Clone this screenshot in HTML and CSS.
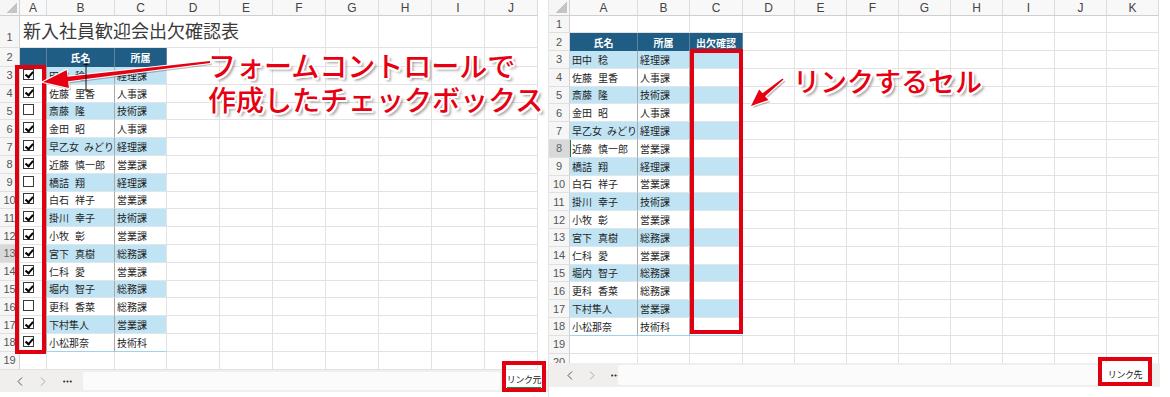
FILE: index.html
```html
<!DOCTYPE html>
<html lang="ja">
<head>
<meta charset="utf-8">
<title>出欠確認表</title>
<link rel="stylesheet" href="styles.css">
</head>
<body>
<div class="page">
  <section class="sheet L">
    <div class="grid">
      <div class="row hrow">
        <div class="rh corner"><span class="tri"></span></div>
        <div class="ch ca">A</div><div class="ch cb">B</div><div class="ch cc">C</div>
        <div class="ch cd">D</div><div class="ch cd">E</div><div class="ch cd">F</div><div class="ch cd">G</div><div class="ch cd">H</div><div class="ch cd">I</div><div class="ch cd">J</div>
      </div>
      <div class="row r1"><div class="rh rh-bottom">1</div><div class="cell title">新入社員歓迎会出欠確認表</div><div class="fill fill5"></div></div>
      <div class="row r2"><div class="rh">2</div><div class="th ca"></div><div class="th cb">氏名</div><div class="th cc">所属</div><div class="fill"></div></div>
      <div class="row"><div class="rh">3</div><div class="cell ca sep"><span class="chk on"></span></div><div class="td band cb sep">田中<span class="sp"></span>稔</div><div class="td band cc">経理課</div><div class="fill"></div></div>
      <div class="row"><div class="rh">4</div><div class="cell ca sep"><span class="chk on"></span></div><div class="td cb sep">佐藤<span class="sp"></span>里香</div><div class="td cc">人事課</div><div class="fill"></div></div>
      <div class="row"><div class="rh">5</div><div class="cell ca sep"><span class="chk"></span></div><div class="td band cb sep">斎藤<span class="sp"></span>隆</div><div class="td band cc">技術課</div><div class="fill"></div></div>
      <div class="row"><div class="rh">6</div><div class="cell ca sep"><span class="chk on"></span></div><div class="td cb sep">金田<span class="sp"></span>昭</div><div class="td cc">人事課</div><div class="fill"></div></div>
      <div class="row"><div class="rh">7</div><div class="cell ca sep"><span class="chk on"></span></div><div class="td band cb sep">早乙女<span class="sp"></span>みどり</div><div class="td band cc">経理課</div><div class="fill"></div></div>
      <div class="row"><div class="rh">8</div><div class="cell ca sep"><span class="chk on"></span></div><div class="td cb sep">近藤<span class="sp"></span>慎一郎</div><div class="td cc">営業課</div><div class="fill"></div></div>
      <div class="row"><div class="rh">9</div><div class="cell ca sep"><span class="chk"></span></div><div class="td band cb sep">橋詰<span class="sp"></span>翔</div><div class="td band cc">経理課</div><div class="fill"></div></div>
      <div class="row"><div class="rh">10</div><div class="cell ca sep"><span class="chk on"></span></div><div class="td cb sep">白石<span class="sp"></span>祥子</div><div class="td cc">営業課</div><div class="fill"></div></div>
      <div class="row"><div class="rh">11</div><div class="cell ca sep"><span class="chk on"></span></div><div class="td band cb sep">掛川<span class="sp"></span>幸子</div><div class="td band cc">技術課</div><div class="fill"></div></div>
      <div class="row"><div class="rh">12</div><div class="cell ca sep"><span class="chk on"></span></div><div class="td cb sep">小牧<span class="sp"></span>彰</div><div class="td cc">営業課</div><div class="fill"></div></div>
      <div class="row"><div class="rh sel">13</div><div class="cell ca sep"><span class="chk on"></span></div><div class="td band cb sep">宮下<span class="sp"></span>真樹</div><div class="td band cc">総務課</div><div class="fill"></div></div>
      <div class="row"><div class="rh">14</div><div class="cell ca sep"><span class="chk on"></span></div><div class="td cb sep">仁科<span class="sp"></span>愛</div><div class="td cc">営業課</div><div class="fill"></div></div>
      <div class="row"><div class="rh">15</div><div class="cell ca sep"><span class="chk on"></span></div><div class="td band cb sep">堀内<span class="sp"></span>智子</div><div class="td band cc">総務課</div><div class="fill"></div></div>
      <div class="row"><div class="rh">16</div><div class="cell ca sep"><span class="chk"></span></div><div class="td cb sep">更科<span class="sp"></span>香菜</div><div class="td cc">総務課</div><div class="fill"></div></div>
      <div class="row"><div class="rh">17</div><div class="cell ca sep"><span class="chk on"></span></div><div class="td band cb sep">下村隼人</div><div class="td band cc">営業課</div><div class="fill"></div></div>
      <div class="row"><div class="rh">18</div><div class="cell ca sep"><span class="chk on"></span></div><div class="td last cb sep">小松那奈</div><div class="td last cc">技術科</div><div class="fill"></div></div>
      <div class="row"><div class="rh">19</div><div class="cell ca"></div><div class="cell cb"></div><div class="cell cc"></div><div class="fill"></div></div>
    </div>
    <div class="tabbar">
      <div class="nav">
        <svg class="nb" width="6" height="9" viewBox="0 0 6 9"><path d="M5 0.5 L1 4.5 L5 8.5" fill="none" stroke="#555" stroke-width="1"/></svg>
        <svg class="nb" width="6" height="9" viewBox="0 0 6 9"><path d="M1 0.5 L5 4.5 L1 8.5" fill="none" stroke="#aaa" stroke-width="1"/></svg>
        <svg class="dots" width="9" height="3" viewBox="0 0 9 3"><circle cx="1.2" cy="1.5" r="1.1" fill="#333"/><circle cx="4.5" cy="1.5" r="1.1" fill="#333"/><circle cx="7.8" cy="1.5" r="1.1" fill="#333"/></svg>
      </div>
      <div class="scroll"></div>
      <div class="tab active"><span class="tab-label">リンク元</span></div>
      <div class="tabend"></div>
    </div>
  </section>

  <section class="sheet R">
    <div class="grid">
      <div class="row hrow">
        <div class="rh corner"><span class="tri"></span></div>
        <div class="ch ca">A</div><div class="ch cb">B</div><div class="ch cc">C</div>
        <div class="ch cd">D</div><div class="ch cd">E</div><div class="ch cd">F</div><div class="ch cd">G</div><div class="ch cd">H</div><div class="ch cd">I</div><div class="ch cd">J</div><div class="ch cd">K</div>
      </div>
      <div class="row r1"><div class="rh">1</div><div class="cell ca"></div><div class="cell cb"></div><div class="cell cc"></div><div class="fill"></div></div>
      <div class="row r2"><div class="rh">2</div><div class="th ca">氏名</div><div class="th cb">所属</div><div class="th cc">出欠確認</div><div class="fill"></div></div>
      <div class="row"><div class="rh">3</div><div class="td band ca sep">田中<span class="sp"></span>稔</div><div class="td band cb sep">経理課</div><div class="td band cc"></div><div class="fill"></div></div>
      <div class="row"><div class="rh">4</div><div class="td ca sep">佐藤<span class="sp"></span>里香</div><div class="td cb sep">人事課</div><div class="td cc"></div><div class="fill"></div></div>
      <div class="row"><div class="rh">5</div><div class="td band ca sep">斎藤<span class="sp"></span>隆</div><div class="td band cb sep">技術課</div><div class="td band cc"></div><div class="fill"></div></div>
      <div class="row"><div class="rh">6</div><div class="td ca sep">金田<span class="sp"></span>昭</div><div class="td cb sep">人事課</div><div class="td cc"></div><div class="fill"></div></div>
      <div class="row"><div class="rh">7</div><div class="td band ca sep">早乙女<span class="sp"></span>みどり</div><div class="td band cb sep">経理課</div><div class="td band cc"></div><div class="fill"></div></div>
      <div class="row"><div class="rh sel">8</div><div class="td ca sep active-cell">近藤<span class="sp"></span>慎一郎</div><div class="td cb sep">営業課</div><div class="td cc"></div><div class="fill"></div></div>
      <div class="row"><div class="rh">9</div><div class="td band ca sep">橋詰<span class="sp"></span>翔</div><div class="td band cb sep">経理課</div><div class="td band cc"></div><div class="fill"></div></div>
      <div class="row"><div class="rh">10</div><div class="td ca sep">白石<span class="sp"></span>祥子</div><div class="td cb sep">営業課</div><div class="td cc"></div><div class="fill"></div></div>
      <div class="row"><div class="rh">11</div><div class="td band ca sep">掛川<span class="sp"></span>幸子</div><div class="td band cb sep">技術課</div><div class="td band cc"></div><div class="fill"></div></div>
      <div class="row"><div class="rh">12</div><div class="td ca sep">小牧<span class="sp"></span>彰</div><div class="td cb sep">営業課</div><div class="td cc"></div><div class="fill"></div></div>
      <div class="row"><div class="rh">13</div><div class="td band ca sep">宮下<span class="sp"></span>真樹</div><div class="td band cb sep">総務課</div><div class="td band cc"></div><div class="fill"></div></div>
      <div class="row"><div class="rh">14</div><div class="td ca sep">仁科<span class="sp"></span>愛</div><div class="td cb sep">営業課</div><div class="td cc"></div><div class="fill"></div></div>
      <div class="row"><div class="rh">15</div><div class="td band ca sep">堀内<span class="sp"></span>智子</div><div class="td band cb sep">総務課</div><div class="td band cc"></div><div class="fill"></div></div>
      <div class="row"><div class="rh">16</div><div class="td ca sep">更科<span class="sp"></span>香菜</div><div class="td cb sep">総務課</div><div class="td cc"></div><div class="fill"></div></div>
      <div class="row"><div class="rh">17</div><div class="td band ca sep">下村隼人</div><div class="td band cb sep">営業課</div><div class="td band cc"></div><div class="fill"></div></div>
      <div class="row"><div class="rh">18</div><div class="td last ca sep">小松那奈</div><div class="td last cb sep">技術科</div><div class="td last cc"></div><div class="fill"></div></div>
      <div class="row"><div class="rh">19</div><div class="cell ca"></div><div class="cell cb"></div><div class="cell cc"></div><div class="fill"></div></div>
      <div class="row"><div class="rh">20</div><div class="cell ca"></div><div class="cell cb"></div><div class="cell cc"></div><div class="fill"></div></div>
    </div>
    <div class="tabbar">
      <div class="nav">
        <svg class="nb" width="6" height="9" viewBox="0 0 6 9"><path d="M5 0.5 L1 4.5 L5 8.5" fill="none" stroke="#555" stroke-width="1"/></svg>
        <svg class="nb" width="6" height="9" viewBox="0 0 6 9"><path d="M1 0.5 L5 4.5 L1 8.5" fill="none" stroke="#aaa" stroke-width="1"/></svg>
        <svg class="dots" width="9" height="3" viewBox="0 0 9 3"><circle cx="1.2" cy="1.5" r="1.1" fill="#333"/><circle cx="4.5" cy="1.5" r="1.1" fill="#333"/><circle cx="7.8" cy="1.5" r="1.1" fill="#333"/></svg>
      </div>
      <div class="scroll"></div>
      <div class="tab"><span class="tab-label">リンク先</span></div>
      <div class="tabend"></div>
    </div>
  </section>
</div>

<div class="redbox box-chk"></div>
<div class="redbox box-link"></div>
<div class="redbox box-tab1"></div>
<div class="redbox box-tab2"></div>

<svg class="arrows" width="1170" height="397" viewBox="0 0 1170 397">
  <g transform="translate(2,2)" fill="#000" opacity="0.25">
    <polygon points="209.9,61 67.5,76.8 66.7,70.1 43,82 68.9,87.9 68.1,81.2 210.1,63"/>
    <polygon points="782.5,78.4 762.5,93.3 759.2,89.5 751,106 768.4,100.1 765.1,96.3 783.5,79.6"/>
  </g>
  <g fill="#e60012" stroke="#fff" stroke-width="2.2" stroke-linejoin="round" paint-order="stroke">
    <polygon points="209.9,61 67.5,76.8 66.7,70.1 43,82 68.9,87.9 68.1,81.2 210.1,63"/>
    <polygon points="782.5,78.4 762.5,93.3 759.2,89.5 751,106 768.4,100.1 765.1,96.3 783.5,79.6"/>
  </g>
  <path d="M83.5 64.5 H88.5 M86 64.5 V90 M83.5 90 H88.5" stroke="#111" stroke-width="1" fill="none"/>
</svg>

<div class="note note-left"><div class="note-line">フォームコントロールで</div><div class="note-line">作成したチェックボックス</div></div>
<div class="note note-right">リンクするセル</div>
</body>
</html>
```

FILE: styles.css
```css
* { box-sizing: border-box; }
html, body { margin: 0; padding: 0; }
body {
  width: 1170px;
  height: 397px;
  overflow: hidden;
  background: #fff;
  position: relative;
  font-family: "Noto Sans CJK JP", "Noto Sans", sans-serif;
  color: #1e1e1e;
}
.page { display: flex; height: 397px; }
.sheet { display: flex; flex-direction: column; flex-shrink: 0; }
.L { width: 548px; }
.R { width: 622px; border-left: 1px solid #e4e4e4; }
.grid { overflow: hidden; }
.L .grid { height: 370px; }
.R .grid { height: 363px; }

.row { display: flex; height: 17.8px; flex-shrink: 0; }
.row.hrow { height: 16px; }
.L .r1 { height: 32px; }
.L .r2 { height: 19px; }
.R .r1 { height: 17px; }
.R .r2 { height: 18px; }

.rh, .ch, .cell, .th, .td, .fill { flex-shrink: 0; height: 100%; }

.rh {
  background: #f6f6f6;
  border-right: 1px solid #d2d2d2;
  border-bottom: 1px solid #e0e0e0;
  font: 11px "Liberation Sans", sans-serif;
  color: #555;
  display: flex; align-items: center; justify-content: center;
}
.rh-bottom { align-items: flex-end; padding-bottom: 4px; }
.rh.sel { background: #d9d9d9; color: #666; }
.L .rh { width: 20px; }
.R .rh { width: 21px; }
.corner { align-items: flex-end; justify-content: flex-end; padding: 0 2px 2px 0; border-bottom-color: #cfcfcf; }
.tri {
  width: 10px; height: 10px;
  background: linear-gradient(to top left, #c4c4c4 50%, transparent 50%);
}
.R .tri { width: 12px; height: 12px; }

.ch {
  background: #f8f8f8;
  border-right: 1px solid #dcdcdc;
  border-bottom: 1px solid #cfcfcf;
  font: 12px "Liberation Sans", sans-serif;
  color: #444;
  display: flex; align-items: center; justify-content: center;
}

.L .ca { width: 27px; }
.L .cb { width: 68px; }
.L .cc { width: 52px; }
.L .cd { width: 53px; }
.L .fill { width: 371px; }
.L .fill5 { width: 265px; }
.L .title { width: 253px; }

.R .ca { width: 68px; }
.R .cb { width: 52px; }
.R .cc { width: 53px; }
.R .cd { width: 52px; }
.R .fill { width: 416px; }

.cell {
  border-right: 1px solid #e2e2e2;
  border-bottom: 1px solid #e2e2e2;
  display: flex; align-items: center;
}
.fill {
  border-bottom: 1px solid #e2e2e2;
  background: repeating-linear-gradient(to right, transparent 0 52px, #e2e2e2 52px 53px);
}
.R .fill {
  background: repeating-linear-gradient(to right, transparent 0 51px, #e2e2e2 51px 52px);
}

.title {
  font-size: 18px;
  color: #3a3a3a;
  padding: 0 0 4px 3px;
  align-items: flex-end;
  white-space: nowrap;
  border-right: 0;
}

.th {
  background: #1f5d84;
  color: #fff;
  font-weight: 700;
  font-size: 10px;
  border-right: 1px solid #5d83a0;
  display: flex; align-items: center; justify-content: center;
  white-space: nowrap;
}
.td {
  font-size: 10px;
  padding-left: 2px;
  display: flex; align-items: center;
  white-space: nowrap;
  overflow: hidden;
  border-right: 1px solid #e2e2e2;
  border-bottom: 1px solid #dde6eb;
  color: #1e1e1e;
}
.band { background: #c1e4f5; }
.sep { border-right-color: #a9a9a9; }
.td.last { border-bottom-color: #9fd3ec; }
.active-cell { box-shadow: inset 1px 0 0 #1e7145; }
.sp { display: inline-block; width: 6px; }

.chk {
  position: relative;
  width: 11px; height: 11px;
  margin-left: 3px;
  margin-top: -2px;
  border: 1px solid #3a3a3a;
  background: #fff;
}
.chk.on::after {
  content: "";
  position: absolute;
  left: 3px; top: 0.5px;
  width: 3px; height: 5.5px;
  border: solid #000;
  border-width: 0 2px 2px 0;
  transform: rotate(40deg);
}

.tabbar {
  display: flex;
  background: #f0efee;
  flex-shrink: 0;
}
.L .tabbar { height: 22px; width: 548px; }
.R .tabbar { height: 24px; width: 611px; }
.nav {
  display: flex; align-items: center;
  flex-shrink: 0;
}
.L .nav { width: 83px; padding-left: 17px; }
.R .nav { width: 69px; padding-left: 18px; }
.nb { margin-right: 17px; flex-shrink: 0; }
.dots { flex-shrink: 0; }
.R .nb { margin-right: 16px; }
.scroll {
  flex: 1;
  background: #fbfbfb;
  margin: 2px 0 2px 0;
  border-radius: 2px;
}
.tab {
  flex-shrink: 0;
  background: #fff;
  color: #222;
  display: flex; align-items: center; justify-content: center;
  position: relative;
}
.tab-label {
  font-size: 9px;
  letter-spacing: -0.4px;
  white-space: nowrap;
  line-height: 12px;
}
.L .tab { width: 44px; margin-left: 2px; padding-top: 1px; }
.R .tab { width: 54px; }
.tab.active .tab-label { border-bottom: 2px solid #1e8c45; padding-bottom: 1px; }
.L .tabend { width: 2px; }
.R .tabend { width: 8px; }

.redbox {
  position: absolute;
  border: 4px solid #e00010;
}
.box-chk { left: 15px; top: 65px; width: 31px; height: 289px; }
.box-link { left: 690px; top: 49px; width: 53px; height: 285px; }
.box-tab1 { left: 502px; top: 361px; width: 44px; height: 31px; }
.box-tab2 { left: 1098px; top: 357px; width: 54px; height: 29px; }

.arrows { position: absolute; left: 0; top: 0; pointer-events: none; }

.note {
  position: absolute;
  color: #e60012;
  font-weight: 500;
  white-space: nowrap;
  text-shadow:
    -1.5px -1.5px 0 #fff, 1.5px -1.5px 0 #fff, -1.5px 1.5px 0 #fff, 1.5px 1.5px 0 #fff,
    0 -2px 0 #fff, 0 2px 0 #fff, -2px 0 0 #fff, 2px 0 0 #fff,
    3px 3px 3px rgba(0, 0, 0, 0.45);
}
.note-line { height: 34px; line-height: 34px; }
.note-left { left: 208px; top: 48px; font-size: 28px; }
.note-right { left: 793px; top: 64px; font-size: 27px; line-height: 34px; }
```
